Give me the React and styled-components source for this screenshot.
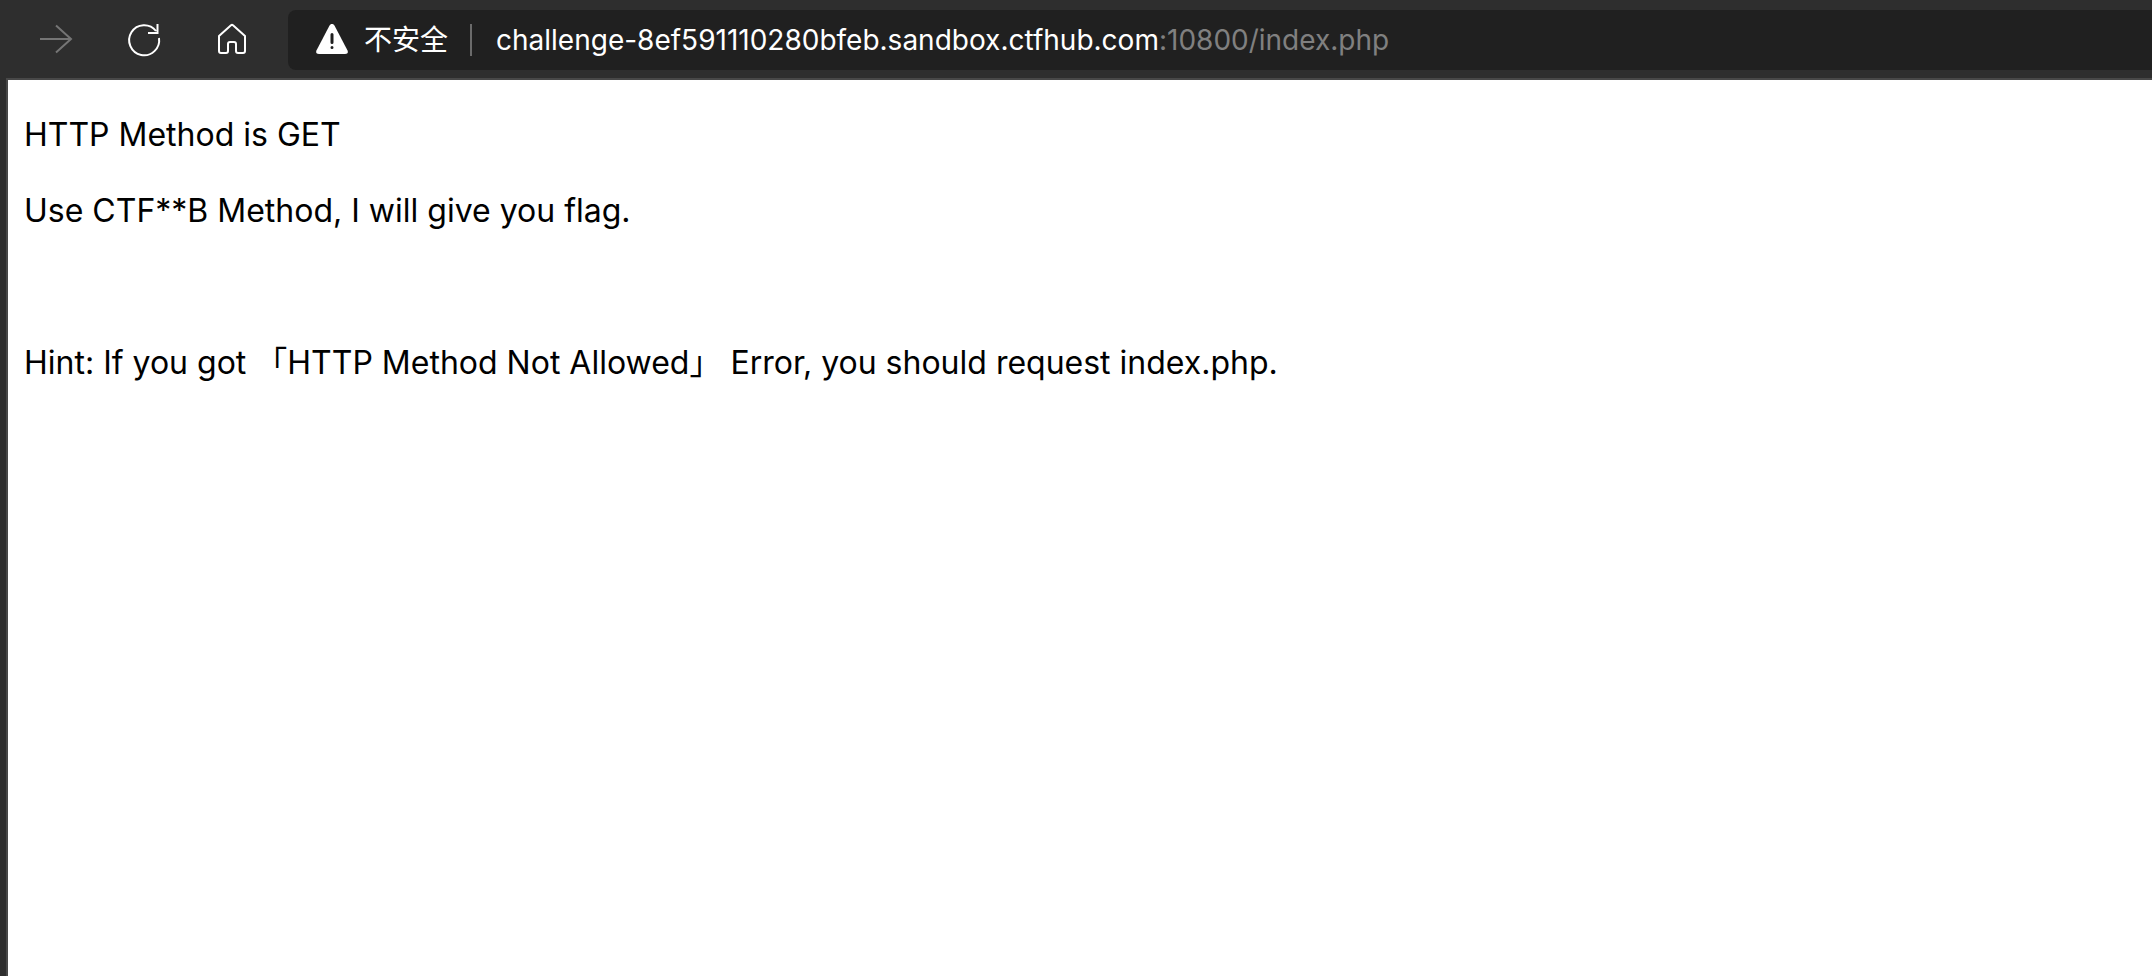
import React from "react";
import styled, { createGlobalStyle } from "styled-components";

const GlobalStyle = createGlobalStyle`
  * { box-sizing: border-box; }
  body {
    margin: 0;
    background: #2e2e2e;
    font-family: Inter, "Noto Sans CJK SC", sans-serif;
  }
`;

const Browser = styled.div`
  min-height: 100vh;
  display: flex;
  flex-direction: column;
  background: #2e2e2e;
`;

const Toolbar = styled.header`
  display: flex;
  align-items: center;
  padding: 10px 0 8px 34px;
`;

const Navigation = styled.nav`
  display: flex;
  gap: 44px;
  margin-right: 34px;
`;

const NavButton = styled.button`
  width: 44px;
  height: 44px;
  padding: 0;
  border: 0;
  background: none;
  color: ${({ disabled }) => (disabled ? "#757575" : "#ffffff")};

  svg { display: block; }
`;

const AddressBar = styled.div`
  flex: 1;
  height: 60px;
  display: flex;
  align-items: center;
  padding-left: 28px;
  border-radius: 8px 0 0 8px;
  background: #202020;
  font-size: 28px;
  line-height: 40px;
  color: #ffffff;
  white-space: nowrap;
`;

const SecurityButton = styled.button`
  display: flex;
  align-items: center;
  gap: 16px;
  padding: 0;
  border: 0;
  background: none;
  color: inherit;
  font: inherit;
`;

const Divider = styled.span`
  width: 2px;
  height: 32px;
  margin: 0 24px 0 22px;
  background: #6b6b6b;
`;

const Url = styled.div`
  flex: 1;
  outline: none;
`;

const UrlRest = styled.span`
  color: #808080;
`;

const Page = styled.main`
  flex: 1;
  margin-left: 6px;
  padding: 32px 16px;
  border-top: 2px solid #484848;
  border-left: 2px solid #484848;
  background: #ffffff;
  color: #000000;
  font-size: 32px;
  line-height: 46px;
`;

const Paragraph = styled.p`
  margin: 0 0 30px;
`;

const iconProps = {
  width: 44,
  height: 44,
  viewBox: "0 0 44 44",
  fill: "none",
  stroke: "currentColor",
  strokeWidth: 2,
  "aria-hidden": true,
};

const ForwardIcon = () => (
  <svg {...iconProps}>
    <path d="M6 21H37M22 7.5L37 21L22 34.5" />
  </svg>
);

const ReloadIcon = () => (
  <svg {...iconProps}>
    <path d="M37 20A15 15 0 1 1 34 13M35.5 6V15H26" />
  </svg>
);

const HomeIcon = () => (
  <svg {...iconProps} strokeLinejoin="round">
    <path d="M9 18L21 7.3Q22 6.5 23 7.3L35 18V33Q35 35 33 35H28Q26 35 26 33V26Q26 24 24 24H20Q18 24 18 26V33Q18 35 16 35H11Q9 35 9 33Z" />
  </svg>
);

const WarningIcon = () => (
  <svg width="32" height="32" viewBox="0 0 32 32" aria-hidden="true">
    <path d="M13.4 1.8Q16 -2 18.6 1.8L31.4 26.2Q33 30 29 30H3Q-1 30 0.6 26.2Z" fill="#ffffff" />
    <path d="M16 10.5V18.5M16 23.4V23.5" stroke="#202020" strokeWidth="3" strokeLinecap="round" />
  </svg>
);

export default function App() {
  return (
    <>
      <GlobalStyle />
      <Browser>
        <Toolbar>
          <Navigation aria-label="Browser navigation">
            <NavButton type="button" aria-label="Forward" disabled><ForwardIcon /></NavButton>
            <NavButton type="button" aria-label="Reload"><ReloadIcon /></NavButton>
            <NavButton type="button" aria-label="Home"><HomeIcon /></NavButton>
          </Navigation>
          <AddressBar>
            <SecurityButton type="button"><WarningIcon />不安全</SecurityButton>
            <Divider />
            <Url role="textbox" aria-label="Address" tabIndex={0}>
              challenge-8ef591110280bfeb.sandbox.ctfhub.com<UrlRest>:10800/index.php</UrlRest>
            </Url>
          </AddressBar>
        </Toolbar>
        <Page>
          <Paragraph>HTTP Method is GET</Paragraph>
          <Paragraph>Use CTF**B Method, I will give you flag.</Paragraph>
          <Paragraph><br /></Paragraph>
          <Paragraph>Hint: If you got 「HTTP Method Not Allowed」 Error, you should request index.php.</Paragraph>
        </Page>
      </Browser>
    </>
  );
}
